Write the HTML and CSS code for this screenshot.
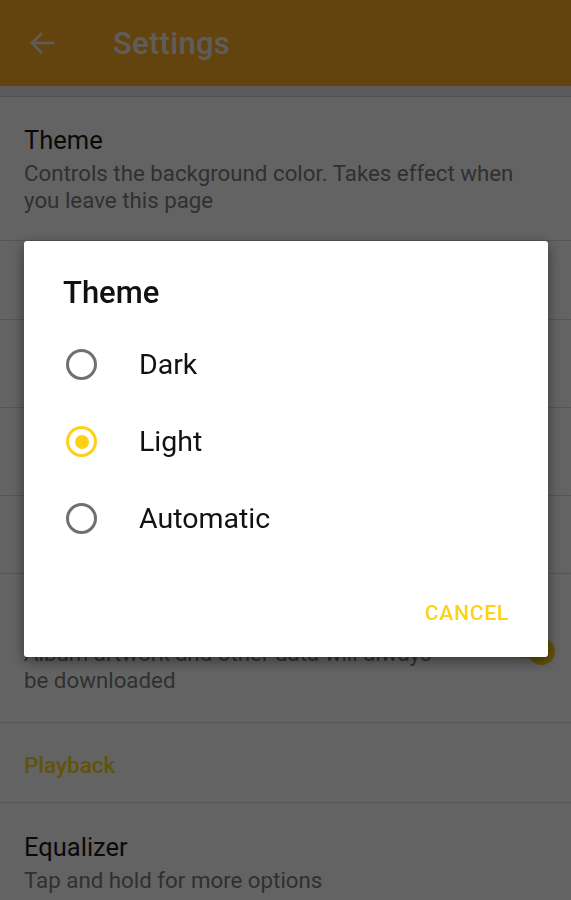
FILE: index.html
```html
<!DOCTYPE html>
<html lang="en">
<head>
  <meta charset="UTF-8">
  <title>Settings</title>
  <meta name="viewport" content="width=device-width, initial-scale=1.0">
  <link rel="stylesheet" href="styles.css">
</head>
<body>

<!-- App bar -->
<header class="appbar">
  <svg class="back" width="28" height="28" viewBox="0 0 28 28">
    <path d="M25 14H4M13 5l-9 9 9 9" fill="none" stroke="currentColor" stroke-width="2.6" stroke-linecap="square"/>
  </svg>
  <span class="appbar-title">Settings</span>
</header>
<div class="appbar-strip"></div>

<!-- Settings list -->
<div class="list">
  <div class="row">
    <div class="row-title">Theme</div>
    <div class="row-sub">Controls the background color. Takes effect when you leave this page</div>
  </div>
  <div class="row row-80">
    <div class="row-title">Accent color</div>
  </div>
  <div class="row row-88">
    <div class="row-title">Language</div>
  </div>
  <div class="row row-88">
    <div class="row-title">Start page</div>
  </div>
  <div class="row row-78">
    <div class="row-title">Library folders</div>
  </div>
  <div class="row row-switch">
    <div class="row-text">
      <div class="row-title">Use mobile data</div>
      <div class="row-sub">Album artwork and other data will always be downloaded</div>
    </div>
    <div class="switch"><span class="switch-thumb"></span></div>
  </div>
  <div class="category">Playback</div>
  <div class="row row-last">
    <div class="row-title">Equalizer</div>
    <div class="row-sub">Tap and hold for more options</div>
  </div>
</div>

<!-- Theme dialog -->
<div class="scrim">
  <div class="dialog">
    <div class="dialog-title">Theme</div>
    <div class="option"><span class="radio"></span>Dark</div>
    <div class="option"><span class="radio checked"></span>Light</div>
    <div class="option"><span class="radio"></span>Automatic</div>
    <div class="dialog-actions">
      <span class="text-button">CANCEL</span>
    </div>
  </div>
</div>

</body>
</html>
```

FILE: styles.css
```css
body {
  margin: 0;
  font-family: Roboto, "Noto Sans", sans-serif;
  background-color: #ffffff;
  overflow: hidden;
  height: 900px;
}

.appbar {
  height: 86px;
  background-color: #ffae26;
  color: #f4f0ea;
  display: flex;
  align-items: center;
  padding-left: 28px;
}

.back {
  display: block;
  margin-right: 57px;
  margin-top: -1px;
}

.appbar-title {
  font-size: 31px;
  font-weight: 500;
  letter-spacing: 0.3px;
}

.appbar-strip {
  height: 10px;
  background-color: #eaeaec;
  border-bottom: 1px solid #d2d2d2;
}

.row {
  padding: 28px 24px 26px 24px;
  border-bottom: 1px solid #dcdcdc;
}

.row-80 { height: 79px; padding: 0 24px; box-sizing: border-box; display: flex; align-items: center; }
.row-88 { height: 88px; padding: 0 24px; box-sizing: border-box; display: flex; align-items: center; }
.row-78 { height: 78px; padding: 0 24px; box-sizing: border-box; display: flex; align-items: center; }

.row-title {
  font-size: 25.5px;
  line-height: 31px;
  color: #1c1c1c;
}

.row-sub {
  font-size: 22.3px;
  line-height: 27px;
  color: #7c7c7c;
  margin-top: 4px;
  padding-right: 24px;
}

.row-switch {
  display: flex;
  align-items: center;
  padding-right: 20px;
  padding-bottom: 28px;
}

.row-switch .row-sub {
  margin-top: 7px;
  padding-right: 70px;
}

.row-text {
  flex: 1;
}

.switch {
  width: 36px;
  height: 15px;
  border-radius: 8px;
  background-color: #fde58a;
  display: flex;
  align-items: center;
  justify-content: flex-end;
  margin-top: 6px;
}

.switch-thumb {
  width: 27px;
  height: 27px;
  border-radius: 50%;
  background-color: #fcd116;
  margin-right: -4px;
}

.category {
  height: 80px;
  display: flex;
  align-items: center;
  padding: 4px 24px 0 24px;
  box-sizing: border-box;
  font-size: 22.5px;
  font-weight: 500;
  color: #fcd61c;
  border-bottom: 1px solid #dcdcdc;
}

.row-last {
  padding-top: 29px;
  border-bottom: none;
}

/* Dialog */
.scrim {
  position: fixed;
  top: 0;
  left: 0;
  right: 0;
  bottom: 0;
  background-color: rgba(0, 0, 0, 0.61);
  display: flex;
  align-items: center;
  justify-content: center;
}

.dialog {
  width: 524px;
  height: 416px;
  margin-left: 1px;
  margin-top: -2px;
  background-color: #ffffff;
  border-radius: 3px;
  box-shadow: 0 4px 14px rgba(0, 0, 0, 0.45);
  box-sizing: border-box;
}

.dialog-title {
  padding: 34px 39px 0 39px;
  font-size: 31px;
  line-height: 36px;
  font-weight: 500;
  color: #111111;
  margin-bottom: 15px;
}

.option {
  height: 77px;
  display: flex;
  align-items: center;
  padding-left: 42px;
  font-size: 28.5px;
  color: #111111;
}

.radio {
  width: 25px;
  height: 25px;
  border: 3px solid #707070;
  border-radius: 50%;
  margin-right: 42px;
  display: flex;
  align-items: center;
  justify-content: center;
}

.radio.checked {
  border-color: #fcd116;
}

.radio.checked::after {
  content: "";
  width: 14px;
  height: 14px;
  border-radius: 50%;
  background-color: #fcd116;
}

.dialog-actions {
  display: flex;
  justify-content: flex-end;
  padding: 42px 39px 0 39px;
}

.text-button {
  font-size: 21px;
  line-height: 28px;
  font-weight: 500;
  color: #fcd116;
  letter-spacing: 0.8px;
}
```
